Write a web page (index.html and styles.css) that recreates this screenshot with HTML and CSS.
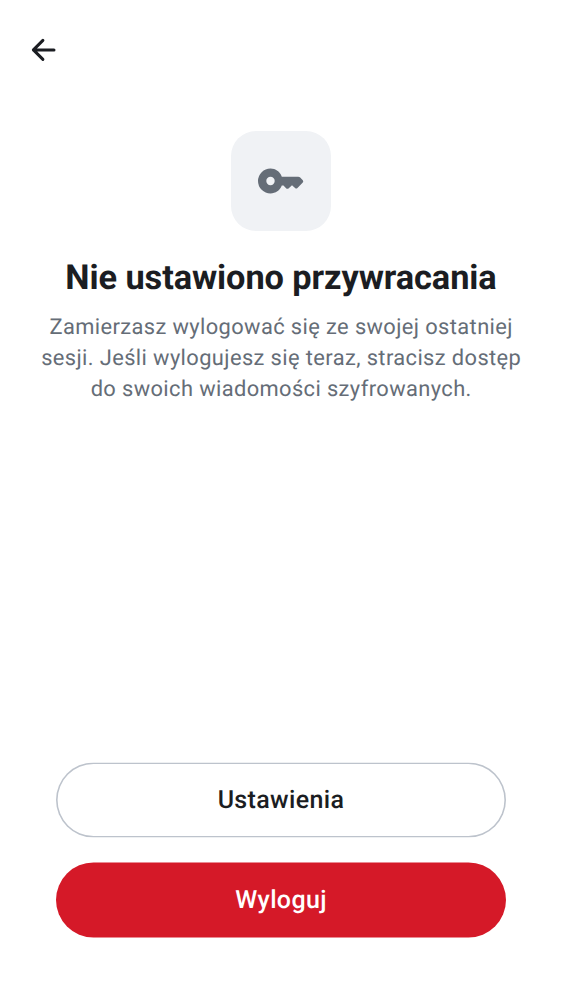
FILE: index.html
```html
<!DOCTYPE html>
<html lang="pl">
<head>
<meta charset="utf-8">
<title>Nie ustawiono przywracania</title>
<link rel="stylesheet" href="styles.css">
</head>
<body>
<main class="screen">
<header class="topbar">
<button class="back" aria-label="Wstecz"><svg viewBox="0 0 24 22"><path d="M10.900 1.400 1.400 10.900l9.500 9.500M1.400 10.900H22"/></svg></button>
</header>
<section class="hero">
<div class="tile"><svg viewBox="0 0 46 26"><path fill-rule="evenodd" d="M12.500 .5C17.500 .5 22 3.500 23.800 8.700H40.200Q41.400 8.700 42.200 9.500L44.800 12.200Q45.800 13.200 44.800 14.400L39.200 20.200Q38.300 21 37.300 20.200L34 17.300 30.500 20.400Q29.400 21.200 28.300 20.400L25.500 17.600H23.800C22 22.500 17.500 25.500 12.500 25.500A12.500 12.500 0 0 1 12.500 .5ZM12.500 8.800A4.200 4.200 0 1 0 12.500 17.200 4.200 4.200 0 0 0 12.500 8.800Z"/></svg></div>
<h1 class="title">Nie ustawiono przywracania</h1>
<p class="text">Zamierzasz wylogować się ze swojej ostatniej<br>sesji. Jeśli wylogujesz się teraz, stracisz dostęp<br>do swoich wiadomości szyfrowanych.</p>
</section>
<footer class="actions">
<button class="btn outline">Ustawienia</button>
<button class="btn danger">Wyloguj</button>
</footer>
</main>
</body>
</html>
```
FILE: styles.css
```css
* { box-sizing: border-box; }
body { margin: 0; background: #fff; font-family: Roboto, sans-serif; text-rendering: geometricPrecision; }
.screen { height: 1000px; display: flex; flex-direction: column; }
.topbar { height: 131px; padding: 39px 0 0 32px; }
.back { display: block; border: 0; padding: 0; background: none; width: 24px; height: 22px; }
.back svg { display: block; width: 24px; height: 22px; overflow: visible; fill: none; stroke: #1b1d22; stroke-width: 3; stroke-linecap: round; stroke-linejoin: round; }
.hero { flex: 1; display: flex; flex-direction: column; align-items: center; text-align: center; }
.tile { width: 100px; height: 100px; border-radius: 25px; background: #f0f2f5; display: flex; align-items: center; justify-content: center; }
.tile svg { width: 46px; height: 26px; fill: #656d77; }
.title { margin: 26px 0 0; font-size: 34.375px; line-height: 42px; letter-spacing: -0.09px; font-weight: 700; color: #1b1d22; white-space: nowrap; }
.text { margin: 12.5px 0 0; padding-left: 0.4px; font-size: 21.875px; line-height: 31.25px; letter-spacing: 0.39px; color: #656d77; white-space: nowrap; }
.actions { padding: 0 56px 62px; display: flex; flex-direction: column; gap: 25px; transform: translateY(-0.5px); }
.btn { height: 75px; border: 0; border-radius: 37.5px; padding: 0; font: 500 25px/31px Roboto, sans-serif; letter-spacing: 0.36px; text-rendering: geometricPrecision; }
.outline { background: #fff; box-shadow: inset 0 0 0 1.6px #bdc3cc; color: #1b1d22; }
.danger { background: #d51928; color: #fff; }
```
